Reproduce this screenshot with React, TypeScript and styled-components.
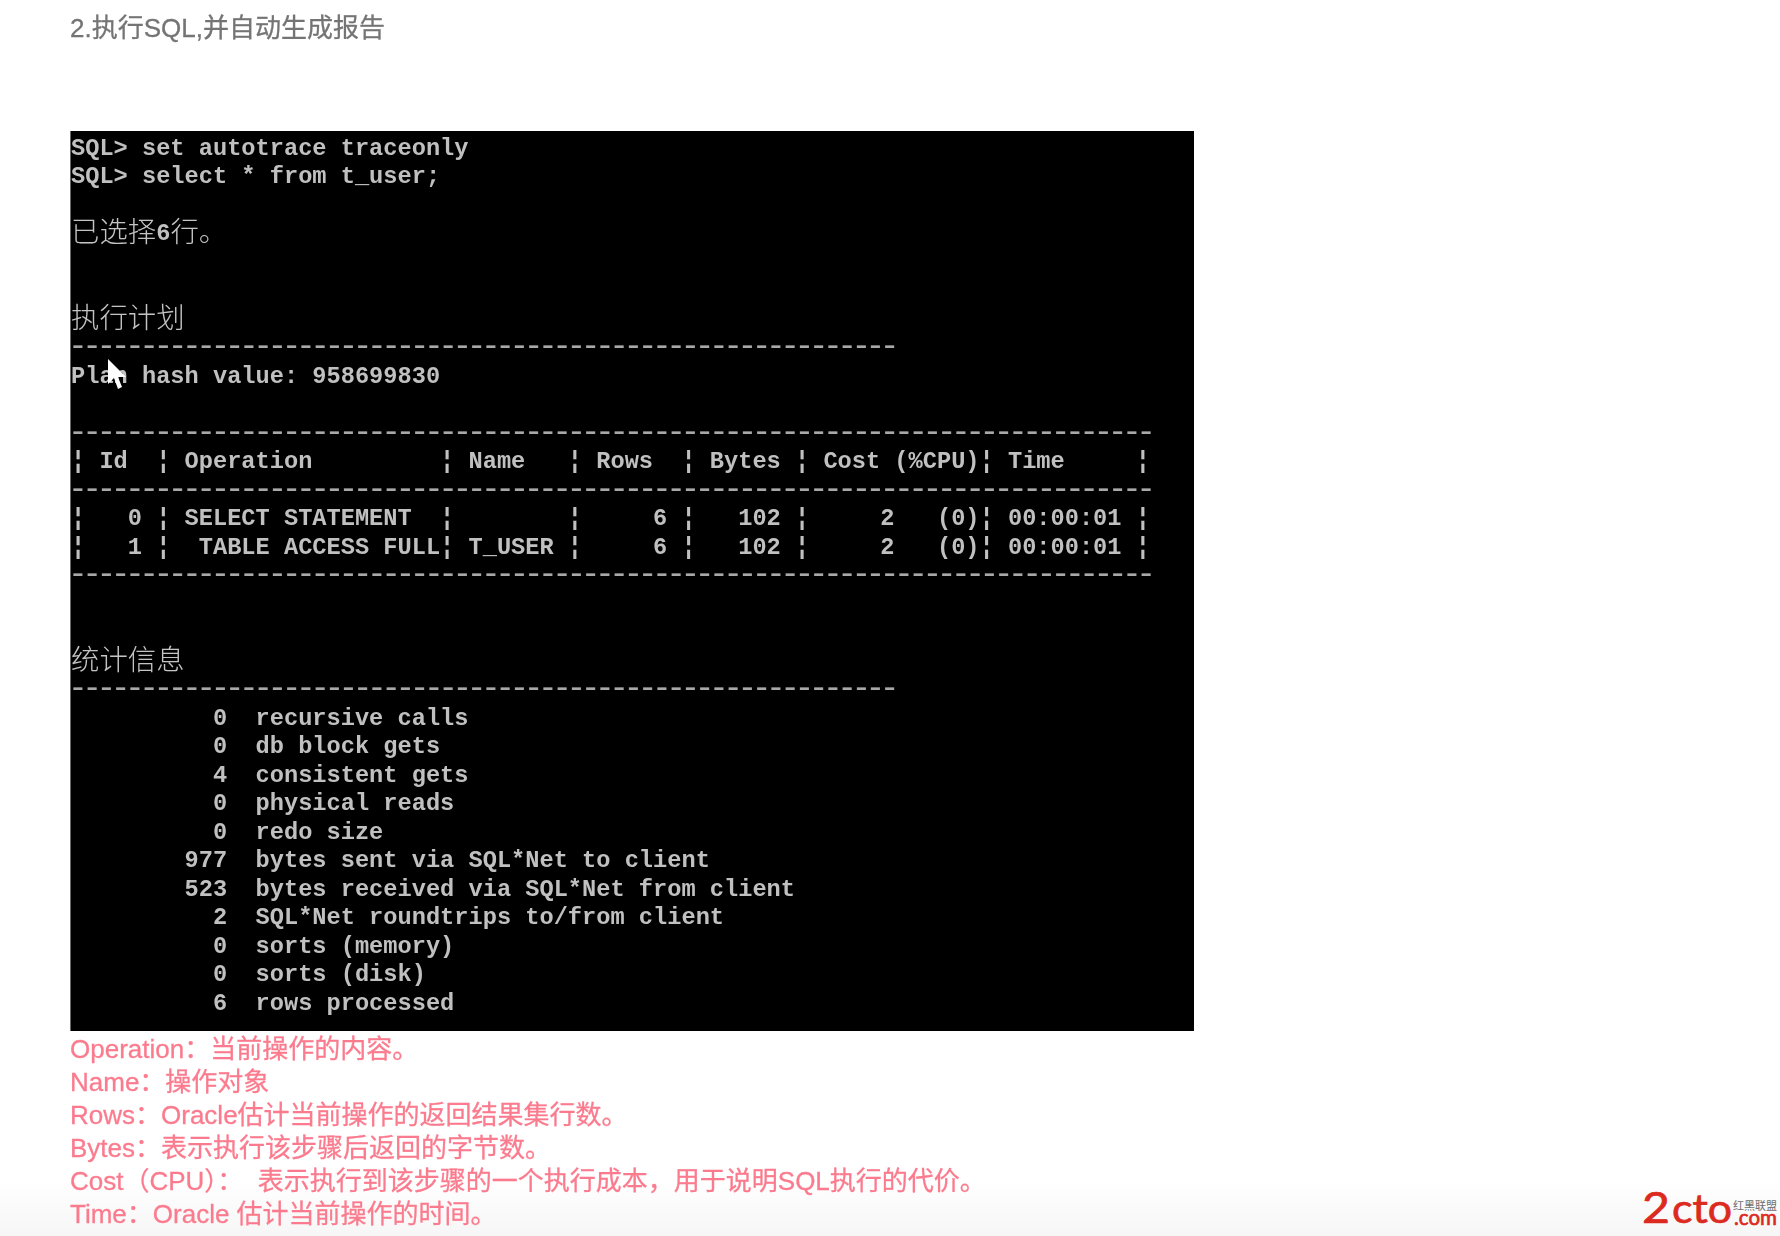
import styled, { createGlobalStyle } from "styled-components";

const GlobalStyle = createGlobalStyle`
  html, body {
    margin: 0;
    padding: 0;
    background: #fff;
  }
`;

const Page = styled.div`
  box-sizing: border-box;
  width: 1780px;
  height: 1236px;
  overflow: hidden;
  padding: 8px 2px 0 70px;
  display: flex;
  flex-direction: column;
  background: linear-gradient(#fff 1180px, #f6f6f6 1236px);
  font-family: "Liberation Sans", "Noto Sans CJK SC", sans-serif;
`;

const Heading = styled.h2`
  margin: 0 0 83px;
  font-size: 26px;
  font-weight: 400;
  line-height: 40px;
  color: #747474;
  -webkit-text-stroke: 0.3px #747474;
  filter: blur(0.3px);
`;

const Terminal = styled.div`
  position: relative;
  box-sizing: border-box;
  flex: none;
  width: 1124px;
  height: 900px;
  padding-top: 3.5px;
  background: #000;
  border-left: 1px solid #6a6a6a;
`;

const Screen = styled.div`
  filter: blur(0.6px);
  color: #c0c0c0;
  font-family: "Liberation Mono", "Noto Sans CJK SC", monospace;
  font-size: 23.67px;
  font-weight: 700;
`;

const Line = styled.div`
  height: 28.5px;
  line-height: 28.5px;
  white-space: pre;
`;

const Cjk = styled.span`
  font-family: "Noto Sans CJK SC", sans-serif;
  font-size: 28.4px;
  font-weight: 300;
  line-height: 0;
  vertical-align: -2px;
  color: #c4c4c4;
`;

const Dashes = styled.div`
  height: 28.5px;
  line-height: 27px;
  margin-left: -3px;
  white-space: pre;
  font-size: 33px;
  font-weight: 400;
  letter-spacing: -5.56px;
  color: #a8a8a8;
`;

const Cursor = styled.svg`
  position: absolute;
  left: 36px;
  top: 227px;
  width: 20px;
  height: 36px;
`;

const Bottom = styled.div`
  flex: 1;
  display: flex;
  justify-content: space-between;
  align-items: flex-end;
  padding-top: 2px;
`;

const Notes = styled.div`
  padding-bottom: 5px;
  font-size: 26px;
  line-height: 33px;
  color: #fb7b8e;
  -webkit-text-stroke: 0.3px #fb7b8e;
  filter: blur(0.3px);
`;

const Note = styled.div`
  white-space: pre;
`;

const Logo = styled.svg`
  display: block;
  width: 136px;
  height: 66px;
`;

const LogoText = styled.text`
  fill: #dc2a20;
  stroke: #dc2a20;
  stroke-width: 0.7px;
  font-family: "Lato", "Liberation Sans", sans-serif;
  font-weight: 400;
`;

const LogoCjk = styled.text`
  fill: #6e6e6e;
  font-family: "Noto Sans CJK SC", sans-serif;
`;

const dash = (n: number) => "-".repeat(n);

type Row =
  | { kind: "text"; text: string }
  | { kind: "cjk"; parts: string[] }
  | { kind: "rule"; length: number }
  | { kind: "blank" };

const t = (text: string): Row => ({ kind: "text", text });
const rule = (length: number): Row => ({ kind: "rule", length });
const blank: Row = { kind: "blank" };

const rows: Row[] = [
  t("SQL> set autotrace traceonly"),
  t("SQL> select * from t_user;"),
  blank,
  { kind: "cjk", parts: ["已选择", "6", "行。"] },
  blank,
  blank,
  { kind: "cjk", parts: ["执行计划"] },
  rule(58),
  t("Plan hash value: 958699830"),
  blank,
  rule(76),
  t("¦ Id  ¦ Operation         ¦ Name   ¦ Rows  ¦ Bytes ¦ Cost (%CPU)¦ Time     ¦"),
  rule(76),
  t("¦   0 ¦ SELECT STATEMENT  ¦        ¦     6 ¦   102 ¦     2   (0)¦ 00:00:01 ¦"),
  t("¦   1 ¦  TABLE ACCESS FULL¦ T_USER ¦     6 ¦   102 ¦     2   (0)¦ 00:00:01 ¦"),
  rule(76),
  blank,
  blank,
  { kind: "cjk", parts: ["统计信息"] },
  rule(58),
  t("          0  recursive calls"),
  t("          0  db block gets"),
  t("          4  consistent gets"),
  t("          0  physical reads"),
  t("          0  redo size"),
  t("        977  bytes sent via SQL*Net to client"),
  t("        523  bytes received via SQL*Net from client"),
  t("          2  SQL*Net roundtrips to/from client"),
  t("          0  sorts (memory)"),
  t("          0  sorts (disk)"),
  t("          6  rows processed"),
];

const notes = [
  "Operation：当前操作的内容。",
  "Name：操作对象",
  "Rows：Oracle估计当前操作的返回结果集行数。",
  "Bytes：表示执行该步骤后返回的字节数。",
  "Cost（CPU）：  表示执行到该步骤的一个执行成本，用于说明SQL执行的代价。",
  "Time：Oracle 估计当前操作的时间。",
];

function TerminalRow({ row }: { row: Row }) {
  if (row.kind === "rule") return <Dashes>{dash(row.length)}</Dashes>;
  if (row.kind === "blank") return <Line> </Line>;
  if (row.kind === "text") return <Line>{row.text}</Line>;
  return (
    <Line>
      {row.parts.map((part, i) =>
        /^\d+$/.test(part) ? part : <Cjk key={i}>{part}</Cjk>
      )}
    </Line>
  );
}

export default function App() {
  return (
    <>
      <GlobalStyle />
      <Page>
        <Heading>2.执行SQL,并自动生成报告</Heading>
        <Terminal>
          <Screen>
            {rows.map((row, i) => (
              <TerminalRow key={i} row={row} />
            ))}
          </Screen>
          <Cursor viewBox="0 0 20 36">
            <path d="M1 1 L1 26 L7 20 L11 31 L15 29 L11 19 L19 19 Z" fill="#fff" />
          </Cursor>
        </Terminal>
        <Bottom>
          <Notes>
            {notes.map((note) => (
              <Note key={note}>{note}</Note>
            ))}
          </Notes>
          <Logo viewBox="0 0 136 66">
            <LogoText x="0" y="53" fontSize="42" textLength="28" lengthAdjust="spacingAndGlyphs">
              2
            </LogoText>
            <LogoText x="30" y="53" fontSize="40" textLength="60" lengthAdjust="spacingAndGlyphs">
              cto
            </LogoText>
            <LogoCjk x="91" y="40" fontSize="11" textLength="44" lengthAdjust="spacingAndGlyphs">
              红黑联盟
            </LogoCjk>
            <LogoText x="92" y="55" fontSize="22" textLength="43" lengthAdjust="spacingAndGlyphs">
              .com
            </LogoText>
          </Logo>
        </Bottom>
      </Page>
    </>
  );
}
